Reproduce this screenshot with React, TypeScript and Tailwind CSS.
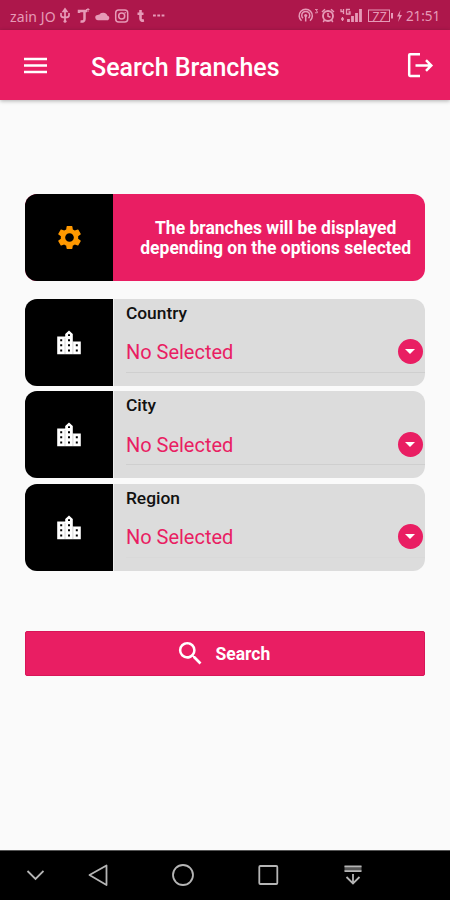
import React from "react";
import { MdSearch, MdSettings } from "react-icons/md";

function StatusBar() {
  return (
    <div className="flex h-[30px] items-center bg-[#ad174b] font-['Noto_Sans',sans-serif] text-[#e69ab7]">
      <span className="ml-[10px] w-[47px] whitespace-nowrap pt-[3px] text-[14px] leading-none tracking-[0.1px]">zain JO</span>
      <svg className="h-[30px] w-[110px] shrink-0" viewBox="57 0 110 30" fill="none" stroke="currentColor" strokeWidth="1.5">
        <path d="M65 11v10M61 13v2.500q0 2 4 2t4-2V13M63.200 11.500 65 9l1.800 2.500z" strokeWidth="1.700" />
        <circle cx="65" cy="21.300" r="1.500" fill="currentColor" stroke="none" />
        <path d="M79 13v-2h8M84.500 11v8q0 3-4 2.500" strokeWidth="2.500" />
        <path d="M86 9.500h3.500M88 8v4" strokeWidth="1" />
        <path d="M98 20.200a2.600 2.600 0 0 1-.3-5.200 2.200 2.200 0 0 1 1.800-.6 4.600 4.600 0 0 1 7.800 1 2.600 2.600 0 0 1 .7 4.800z" fill="currentColor" stroke="none" />
        <rect x="115.700" y="10" width="12" height="12" rx="3" />
        <circle cx="121.700" cy="16" r="3" />
        <circle cx="125.200" cy="12.700" r=".8" fill="currentColor" stroke="none" />
        <path d="M140.500 10v8.500q0 2.500 3.500 2M137.500 13.700h6" strokeWidth="2.600" />
        <path d="M153 15.500h2.800M157.300 15.500h2.800M161.600 15.500h2.800" strokeWidth="2" />
      </svg>
      <svg className="ml-[130px] h-[30px] w-[108px] shrink-0" viewBox="297 0 108 30" fill="none" stroke="currentColor" strokeWidth="1.500">
        <path d="M301.500 20.800a6.600 6.600 0 1 1 8.500 0M303 18.300a4 4 0 1 1 5.500 0M305.700 15.500v6" />
        <circle cx="305.700" cy="15.500" r="1.600" fill="currentColor" stroke="none" />
        <path d="M315 9.500h2.500L316.200 11q1.800.2 1.200 1.800H315" strokeWidth=".9" />
        <circle cx="328" cy="16" r="5" strokeWidth="1.900" />
        <path d="M328 13v3.200l2.500 1M322 12l3-2.700M334 12l-3-2.700M324.500 20l-1.300 2M331.500 20l1.300 2" />
        <path d="M341 9v2.500h3M343.500 9v5M350 9.500h-3.500V14h3.500v-2h-1.500M341 19h3M342.500 17v4" strokeWidth="1.300" />
        <path d="M348.500 22v-3M352.500 22v-6M356.500 22v-9M360.500 22V9" strokeWidth="2.800" />
        <rect x="368.500" y="10" width="21" height="11.500" strokeWidth="1" />
        <path d="M392 13v5.500" strokeWidth="2" />
        <text x="379" y="20.500" textAnchor="middle" fill="currentColor" stroke="none" className="font-['Noto_Sans',sans-serif] text-[13px] italic">77</text>
        <path d="m400.500 10-3.500 6.500h2.300L398 22l4-7h-2.400z" fill="currentColor" stroke="none" />
      </svg>
      <span className="ml-[1px] whitespace-nowrap pt-[3px] text-[13.500px] leading-none tracking-[-0.100px]">21:51</span>
    </div>
  );
}

function Header() {
  return (
    <header className="flex h-[70px] items-center bg-[#e91e63] text-white shadow-[0_1px_4px_rgba(0,0,0,0.3)]">
      <svg className="ml-[24px] h-[18px] w-[23px]" viewBox="0 0 23 18" stroke="currentColor" strokeWidth="2.500">
        <path d="M0 3.100h23M0 9.600h23M0 16h23" />
      </svg>
      <h1 className="ml-[44px] w-[316px] whitespace-nowrap pt-[5px] text-[25px] font-medium leading-none">Search Branches</h1>
      <svg className="h-[26px] w-[28px]" viewBox="0 0 28 26" fill="none" stroke="currentColor" strokeWidth="2.500">
        <path d="M13 2.300H3q-.8 0-.8.800v20q0 .8.800.8h10M8.500 13.500h16M19 8.200l5.300 5.300-5.300 5.300" />
      </svg>
    </header>
  );
}

function BuildingIcon() {
  return (
    <svg className="h-[25px] w-[24px]" viewBox="0 0 24 25">
      <path d="M.2 6.500h8V4L12 .5 15.800 4v7.500h8v12.800H.2z" fill="#fff" />
      <path
        d="M3.200 9.200h2v2h-2zM3.200 14.200h2v2h-2zM3.200 19.500h2v2h-2zM11 9.200h2v2h-2zM11 14.200h2v2h-2zM11 19.500h2v2h-2zM18.800 14.200h2v2h-2zM18.800 19.500h2v2h-2zM11 4.200h2v1.800h-2z"
        fill="#000"
      />
      <path d="M8 8v16M15.900 11.500V24" stroke="#aaa" strokeWidth=".5" />
    </svg>
  );
}

function SelectCard({ label, underline }: { label: string; underline: string }) {
  return (
    <div className="flex h-[87px] overflow-hidden rounded-[12px] bg-[#dcdcdc]">
      <div className="flex w-[87.500px] shrink-0 items-center justify-center bg-black">
        <BuildingIcon />
      </div>
      <div className="flex grow flex-col border-l border-[#eeeeee] pl-[12px]">
        <div className="pt-[4px] text-[17.400px] font-medium leading-[20px] text-[#111]">{label}</div>
        <div className={"flex h-[50px] items-center justify-between border-b pr-[2.500px] pt-[9px] " + underline}>
          <span className="pt-[1px] text-[20px] leading-[26px] text-[#e91e63]">No Selected</span>
          <span className="flex size-[25px] items-center justify-center rounded-full bg-[#e91e63]">
            <svg className="h-[5px] w-[10px]" viewBox="0 0 10 5"><path d="M0 0h10L5 5z" fill="#fff" /></svg>
          </span>
        </div>
      </div>
    </div>
  );
}

function NavigationBar() {
  return (
    <nav className="flex h-[50px] items-center border-t border-[#555] bg-black pb-[2px] text-[#b5b5b5]">
      <svg className="ml-[26px] h-[24px] w-[18px]" viewBox="26 863 18 24" fill="none" stroke="currentColor" strokeWidth="1.800">
        <path d="m27.500 871 8 8 8-8" />
      </svg>
      <svg className="ml-[43px] h-[24px] w-[22px]" viewBox="87 863 22 24" fill="none" stroke="currentColor" strokeWidth="1.800" strokeLinejoin="round">
        <path d="M106.500 865.500v19.500L89.500 875z" />
      </svg>
      <svg className="ml-[62px] h-[24px] w-[24px]" viewBox="171 863 24 24" fill="none" stroke="currentColor" strokeWidth="1.800">
        <circle cx="183" cy="875" r="10" />
      </svg>
      <svg className="ml-[62px] h-[24px] w-[22px]" viewBox="257 863 22 24" fill="none" stroke="currentColor" strokeWidth="1.800">
        <rect x="259.300" y="866" width="18" height="18" rx="1" />
      </svg>
      <svg className="ml-[64px] h-[24px] w-[20px]" viewBox="343 863 20 24" fill="none" stroke="currentColor" strokeWidth="1.800">
        <path d="M344.500 868.500h17" stroke="#555" strokeWidth="5" />
        <path d="M344.500 866.300h17M344.500 871.200h17M353 874v9.500M346.500 877l6.500 6.500 6.500-6.500" />
      </svg>
    </nav>
  );
}

export default function App() {
  return (
    <div className="flex h-[900px] w-[450px] flex-col overflow-hidden bg-[#fafafa] font-['Roboto',sans-serif]">
      <StatusBar />
      <Header />
      <main className="flex grow flex-col pl-[25.400px] pr-[24.600px] pt-[94px]">
        <div className="flex h-[87px] overflow-hidden rounded-[12px] bg-[#e91e63]">
          <div className="flex w-[87.500px] shrink-0 items-center justify-center bg-black text-[#ff9800]">
            <MdSettings className="size-[29px]" />
          </div>
          <p className="flex grow flex-col items-center justify-center pl-[13px] pt-[2px] text-center text-[17.500px] font-bold leading-[19.500px] text-white">
            <span className="whitespace-nowrap">The branches will be displayed</span>
            <span className="whitespace-nowrap">depending on the options selected</span>
          </p>
        </div>
        <div className="mt-[17.800px] flex flex-col gap-[5.500px]">
          <SelectCard label="Country" underline="border-[#cfcfcf]" />
          <SelectCard label="City" underline="border-[#cfcfcf]" />
          <SelectCard label="Region" underline="border-[#d9d9d9]" />
        </div>
        <button className="mt-[60.200px] flex h-[45px] items-center justify-center rounded-[2px] border border-[#d81558] bg-[#e91e63] pr-[6px] text-white">
          <MdSearch className="size-[31px]" />
          <span className="ml-[10px] pt-[1px] text-[17.500px] font-bold">Search</span>
        </button>
      </main>
      <NavigationBar />
    </div>
  );
}
